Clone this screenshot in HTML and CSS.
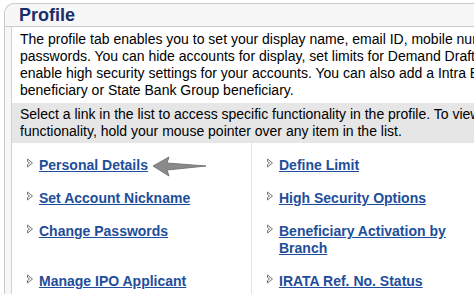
FILE: index.html
```html
<!DOCTYPE html>
<html lang="en">
<head>
	<meta charset="UTF-8">
	<title>Profile</title>
	<link rel="stylesheet" href="styles.css">
</head>
<body>
	<div class="profile-box">
		<div class="profile-title">Profile</div>
		<div class="profile-body">
			<p class="profile-intro">The profile tab enables you to set your display name, email ID, mobile number and login<br>passwords. You can hide accounts for display, set limits for Demand Draft transactions and<br>enable high security settings for your accounts. You can also add a Intra Bank<br>beneficiary or State Bank Group beneficiary.</p>
			<p class="profile-tip">Select a link in the list to access specific functionality in the profile. To view a description of the<br>functionality, hold your mouse pointer over any item in the list.</p>
			<div class="profile-links">
				<div class="link-cell"><a href="javascript:void(0);">Personal Details</a></div>
				<div class="link-cell right"><a href="javascript:void(0);">Define Limit</a></div>
				<div class="link-cell"><a href="javascript:void(0);">Set Account Nickname</a></div>
				<div class="link-cell right"><a href="javascript:void(0);">High Security Options</a></div>
				<div class="link-cell"><a href="javascript:void(0);">Change Passwords</a></div>
				<div class="link-cell right"><a href="javascript:void(0);">Beneficiary Activation by Branch</a></div>
				<div class="link-cell"><a href="javascript:void(0);">Manage IPO Applicant</a></div>
				<div class="link-cell right"><a href="javascript:void(0);">IRATA Ref. No. Status</a></div>
			</div>
			<!-- 指示箭头 -->
			<svg class="pointer-arrow" width="56" height="22" viewBox="0 0 56 22">
				<path d="M1 10 L17 1 L15 7 L54 10 L15 14 L17 20 Z" fill="#8a8a8a" stroke="#7a7a7a" stroke-width="1" stroke-linejoin="round"/>
			</svg>
		</div>
	</div>
</body>
</html>
```

FILE: styles.css
```css
* {
	margin: 0;
	padding: 0;
}
html, body {
	height: 100%;
	overflow: hidden;
}
body {
	background-color: #fff;
	font-family: "Liberation Sans", Arial, Helvetica, sans-serif;
	color: #000;
}
.profile-box {
	margin: 3px 0 0 4px;
	height: 291px;
	overflow: hidden;
	border: 1px solid #c9c9c9;
	border-right: none;
	border-bottom: none;
	border-top-left-radius: 10px;
	background-color: #f7f7f7;
	padding-left: 6px;
}
.profile-title {
	height: 22px;
	line-height: 22px;
	margin-left: -6px;
	padding-left: 14px;
	font-size: 18px;
	font-weight: bold;
	color: #1b2d6b;
	border-bottom: 1px solid #c9c9c9;
}
.profile-body {
	position: relative;
	height: 270px;
	background-color: #fff;
	border-left: 1px solid #d2d2d2;
}
.profile-intro {
	font-size: 14px;
	line-height: 17px;
	padding: 4px 0 0 8px;
	white-space: nowrap;
}
.profile-tip {
	margin-top: 4px;
	background-color: #e6e6e6;
	font-size: 14px;
	line-height: 17px;
	padding: 3px 0 3px 8px;
	white-space: nowrap;
}
.profile-links {
	display: grid;
	grid-template-columns: 239px 240px;
	height: 200px;
	grid-template-rows: auto auto auto 1fr;
}
.link-cell {
	padding: 14px 0 16px 27px;
	font-size: 14px;
	line-height: 17px;
	font-weight: bold;
	background: url("data:image/svg+xml;utf8,<svg xmlns='http://www.w3.org/2000/svg' width='8' height='10' viewBox='0 0 8 10'><path d='M1.5 1 L6.5 5 L1.5 9 L1.5 6.5 L3.5 5 L1.5 3.5 Z' fill='none' stroke='%23777' stroke-width='1'/></svg>") no-repeat 14px 15px;
}
.link-cell + .link-cell + .link-cell {
	padding-top: 0;
	background-position: 14px 1px;
}
.link-cell.right {
	border-left: 1px solid #e4e4e4;
	padding-left: 27px;
	width: 190px;
}
.link-cell a {
	color: #1e4e9b;
	text-decoration: underline;
}
.pointer-arrow {
	position: absolute;
	left: 140px;
	top: 129px;
}
```
